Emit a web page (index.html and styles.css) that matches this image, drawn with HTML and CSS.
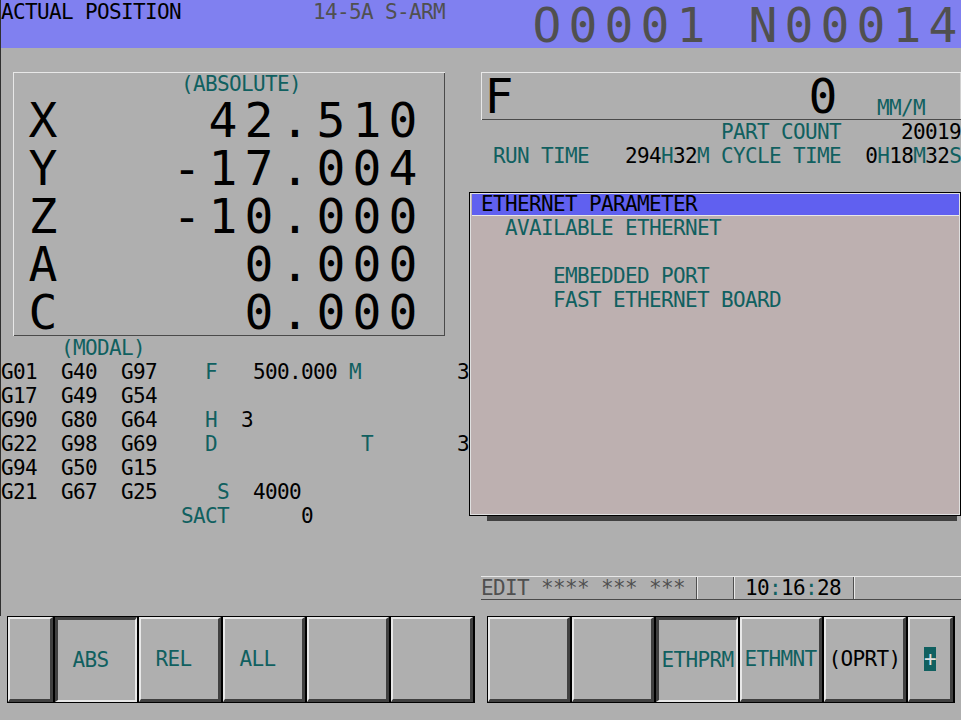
FILE: index.html
```html
<!DOCTYPE html>
<html lang="en">
<head>
    <meta charset="UTF-8">
    <meta name="viewport" content="width=device-width, initial-scale=1.0">
    <title>Actual Position</title>
    <link rel="stylesheet" href="styles.css">
</head>
<body>
    <div class="screen">
        <div class="upper">
            <!-- Top title bar -->
            <div class="title">
                <div class="title-text">ACTUAL POSITION           <span class="dim">14-5A S-ARM</span></div>
                <div class="big prog">O0001 N00014</div>
            </div>

            <div class="main">
                <!-- Left half: position and modal data -->
                <div class="left">
                    <div class="pos">
                        <div class="pos-head teal">(ABSOLUTE)</div>
                        <div class="big axis">X    42.510</div>
                        <div class="big axis">Y   -17.004</div>
                        <div class="big axis">Z   -10.000</div>
                        <div class="big axis">A     0.000</div>
                        <div class="big axis">C     0.000</div>
                    </div>
                    <div class="modal">
                        <div class="line">     <span class="teal">(MODAL)</span></div>
                        <div class="line">G01  G40  G97    <span class="teal">F</span>   500.000 <span class="teal">M</span>        3</div>
                        <div class="line">G17  G49  G54</div>
                        <div class="line">G90  G80  G64    <span class="teal">H</span>  3</div>
                        <div class="line">G22  G98  G69    <span class="teal">D</span>            <span class="teal">T</span>       3</div>
                        <div class="line">G94  G50  G15</div>
                        <div class="line">G21  G67  G25     <span class="teal">S</span>  4000</div>
                        <div class="line">               <span class="teal">SACT</span>      0</div>
                    </div>
                </div>

                <!-- Right half: feed, counters, ethernet window, status -->
                <div class="right">
                    <div class="feed">
                        <div class="big">F        0</div>
                        <div class="unit teal">MM/M</div>
                    </div>
                    <div class="line">                    <span class="teal">PART COUNT</span>     20019</div>
                    <div class="line"> <span class="teal">RUN TIME</span>   294<span class="teal">H</span>32<span class="teal">M</span> <span class="teal">CYCLE TIME</span>  0<span class="teal">H</span>18<span class="teal">M</span>32<span class="teal">S</span></div>

                    <div class="panel">
                        <div class="panel-title">ETHERNET PARAMETER</div>
                        <div class="panel-body teal">
                            <div class="line">  AVAILABLE ETHERNET</div>
                            <div class="line"></div>
                            <div class="line">      EMBEDDED PORT</div>
                            <div class="line">      FAST ETHERNET BOARD</div>
                        </div>
                    </div>

                    <div class="status">
                        <div class="status-mode">EDIT **** *** ***</div>
                        <div class="status-sep"></div>
                        <div class="status-gap"></div>
                        <div class="status-sep"></div>
                        <div class="status-time">10<span class="teal">:</span>16<span class="teal">:</span>28</div>
                        <div class="status-sep"></div>
                    </div>
                </div>
            </div>
        </div>

        <!-- Soft keys -->
        <div class="softkeys">
            <div class="keyrow">
                <div class="key narrow"></div>
                <div class="key on"><span class="key-label short">ABS</span></div>
                <div class="key"><span class="key-label short">REL</span></div>
                <div class="key"><span class="key-label short">ALL</span></div>
                <div class="key"></div>
                <div class="key"></div>
            </div>
            <div class="keyrow">
                <div class="key"></div>
                <div class="key"></div>
                <div class="key on"><span class="key-label">ETHPRM</span></div>
                <div class="key"><span class="key-label">ETHMNT</span></div>
                <div class="key"><span class="key-label ink">(OPRT)</span></div>
                <div class="key narrow"><span class="plus">+</span></div>
            </div>
        </div>
    </div>
</body>
</html>
```

FILE: styles.css
```css
body {
    margin: 0;
    background-color: #afafaf;
    font-family: "DejaVu Sans Mono", "Liberation Mono", monospace;
    font-size: 21px;
    letter-spacing: -0.643px;
    line-height: 24px;
    font-variant-numeric: slashed-zero;
    color: #000;
}

.screen {
    width: 961px;
    height: 720px;
    overflow: hidden;
}

.upper {
    height: 616px;
    border-left: 1px solid #303030;
}

.teal {
    color: #106060;
}

.dim {
    color: #505050;
}

.ink {
    color: #000;
}

.line {
    height: 24px;
    white-space: pre;
}

/* double size characters, 36px per cell */
.big {
    font-size: 48px;
    line-height: 48px;
    letter-spacing: 7.1px;
    padding-left: 3.55px;
    margin-right: -3.55px;
    white-space: pre;
}

.title {
    display: flex;
    height: 48px;
    background-color: #8080f0;
}

.title-text {
    width: 528px;
    white-space: pre;
}

.prog {
    color: #505050;
    line-height: 50px;
}

.main {
    display: flex;
    height: 552px;
}

.left {
    width: 480px;
    padding-top: 24px;
}

.right {
    width: 480px;
    padding-top: 24px;
    display: flex;
    flex-direction: column;
}

.pos {
    margin-left: 12px;
    width: 432px;
    height: 264px;
    box-sizing: border-box;
    box-shadow: inset 1px 1px 0 #e8e8e8, inset -1px -1px 0 #4a4a4a;
}

.pos-head {
    padding-left: 168px;
    white-space: pre;
}

.big.axis {
    padding-left: 15.55px;
}

.feed {
    display: flex;
    height: 48px;
    box-shadow: inset 1px 1px 0 #e8e8e8, inset 0 -1px 0 #4a4a4a, inset -1px 0 0 #d0d0d0;
}

.unit {
    align-self: flex-end;
    margin-left: 36px;
}

.panel {
    margin: 24px 0 0 -12px;
    height: 324px;
    box-sizing: border-box;
    border: 1px solid #000;
    padding: 1px 1px 1px 2px;
    background-color: #bdb0b0;
    box-shadow: inset 0 0 0 1px #e0e0e0, 7px 16px 0 -11px #404040;
}

.panel-title {
    height: 21px;
    line-height: 21px;
    padding-left: 9px;
    background-color: #6060f0;
    border-bottom: 1px solid #e8e8e8;
    white-space: pre;
}

.panel-body {
    padding-left: 9px;
}

.status {
    display: flex;
    margin-top: auto;
    height: 24px;
    color: #505050;
    box-shadow: inset 0 1px 0 #e8e8e8, inset 0 -1px 0 #4a4a4a;
}

.status-mode {
    width: 215px;
    white-space: pre;
}

.status-sep {
    width: 0;
    margin: 1px 0;
    border-left: 1px solid #505050;
    border-right: 1px solid #e8e8e8;
}

.status-gap {
    width: 35px;
}

.status-time {
    width: 108px;
    padding-left: 10px;
    color: #000;
}

.softkeys {
    display: flex;
    gap: 12px;
    padding-left: 7px;
}

.keyrow {
    display: flex;
    gap: 2px;
    padding: 1px 2px 1px 1px;
    background-color: #000;
}

.key {
    display: flex;
    align-items: center;
    justify-content: center;
    width: 82px;
    height: 85px;
    box-sizing: border-box;
    border-style: solid;
    border-width: 2px 3px 3px 2px;
    border-color: #e8e8e8 #404040 #404040 #e8e8e8;
    background-color: #afafaf;
    color: #106060;
}

.key.narrow {
    width: 45px;
}

.key.on {
    border-width: 3px 2px 2px 3px;
    border-color: #404040 #e8e8e8 #e8e8e8 #404040;
}

.key-label {
    width: 72px;
    box-sizing: border-box;
    white-space: pre;
}

.key-label.short {
    padding-left: 12px;
}

.plus {
    display: inline-block;
    width: 12px;
    height: 24px;
    letter-spacing: 0;
    text-align: center;
    background-color: #106060;
    color: #e0e0e0;
}
```
